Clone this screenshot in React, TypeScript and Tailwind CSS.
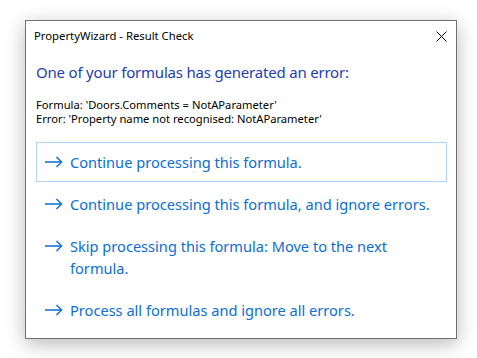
import { useState } from 'react';

const OPTIONS = [
  'Continue processing this formula.',
  'Continue processing this formula, and ignore errors.',
  'Skip processing this formula: Move to the next formula.',
  'Process all formulas and ignore all errors.',
];

function Arrow() {
  return (
    <svg width="19" height="12" viewBox="0 0 19 12" fill="none" stroke="currentColor" strokeWidth="1.6" className="shrink-0 text-[#1a74d8]">
      <path d="M1 6H17.5" />
      <path d="M12.5 1L17.5 6L12.5 11" />
    </svg>
  );
}

function CommandLink({ label, focused }: { label: string; focused: boolean }) {
  return (
    <button
      className={`flex items-start gap-[7px] w-full text-left pl-[7px] pr-3 py-[8px] border ${
        focused ? 'border-[#b1d6f4]' : 'border-transparent'
      }`}
    >
      <span className="h-[22px] flex items-center">
        <Arrow />
      </span>
      <span className="text-[14.6px] leading-[22px] text-[#0b6ed6]">{label}</span>
    </button>
  );
}

export default function App() {
  const [focused] = useState(0);

  return (
    <div className="w-[477px] h-[358px] bg-white pt-[20px] pl-[25px]" style={{ fontFamily: '"Noto Sans", "Open Sans", sans-serif' }}>
      <div className="w-[432px] border border-[#707070] bg-white shadow-[0_5px_18px_rgba(0,0,0,0.28)] flex flex-col">
        <div className="h-[30px] flex items-center justify-between pl-[8px] pr-[9px]">
          <span className="text-[11.3px] text-black">PropertyWizard - Result Check</span>
          <svg width="11" height="11" viewBox="0 0 11 11" stroke="#000" strokeWidth="1">
            <path d="M0.5 0.5L10.5 10.5M10.5 0.5L0.5 10.5" />
          </svg>
        </div>

        <div className="flex flex-col pl-[10px] pr-[9px] pb-[8px]">
          <h1 className="mt-[10px] text-[15px] tracking-[-0.2px] leading-[22px] text-[#1c3db3]">
            One of your formulas has generated an error:
          </h1>
          <div className="mt-[15px] text-[11.2px] leading-[14px] text-black">
            <p>Formula: 'Doors.Comments = NotAParameter'</p>
            <p>Error: 'Property name not recognised: NotAParameter'</p>
          </div>

          <div className="mt-[16px] flex flex-col gap-[2px]">
            {OPTIONS.map((o, i) => (
              <CommandLink key={o} label={o} focused={i === focused} />
            ))}
          </div>
        </div>
      </div>
    </div>
  );
}
